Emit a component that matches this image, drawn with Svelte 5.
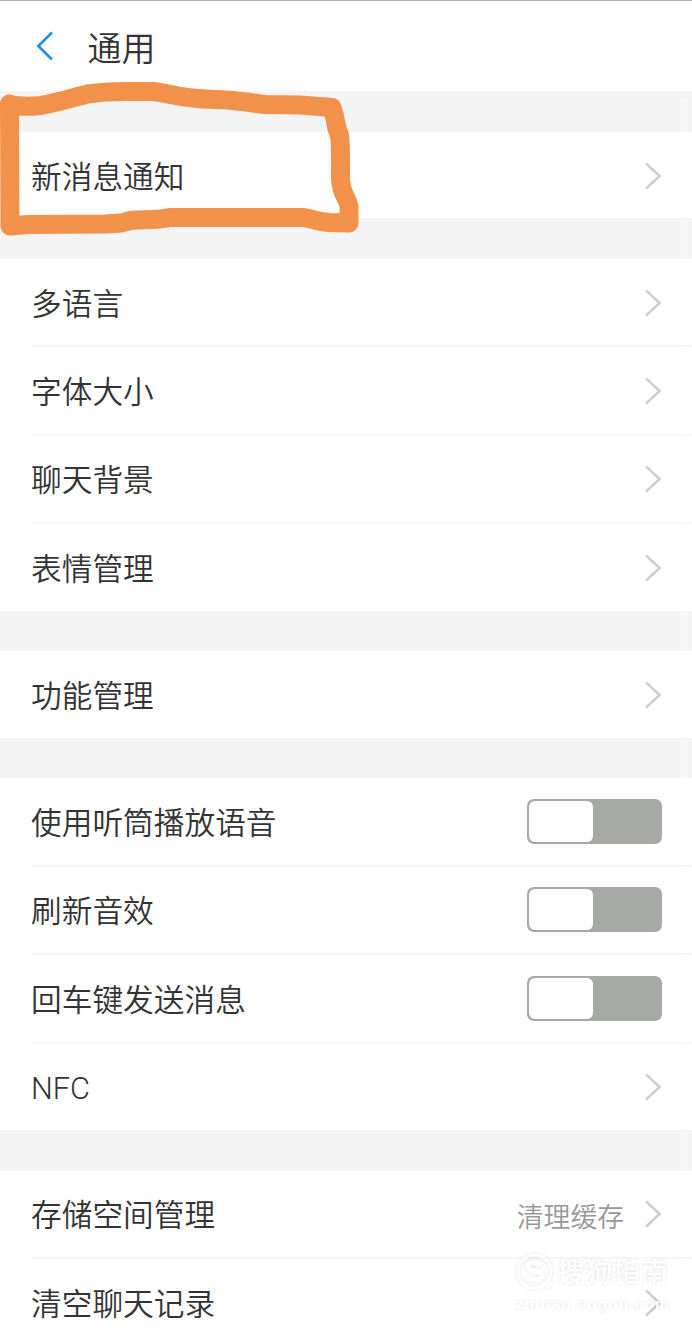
<script lang="ts">
  interface Item {
    label: string;
    value?: string;
    on?: boolean;
  }

  let groups: Item[][] = $state([
    [{ label: '新消息通知' }],
    [{ label: '多语言' }, { label: '字体大小' }, { label: '聊天背景' }, { label: '表情管理' }],
    [{ label: '功能管理' }],
    [
      { label: '使用听筒播放语音', on: false },
      { label: '刷新音效', on: false },
      { label: '回车键发送消息', on: false },
      { label: 'NFC' },
    ],
    [{ label: '存储空间管理', value: '清理缓存' }, { label: '清空聊天记录' }],
  ]);
</script>

<div class="screen">
  <header>
    <svg class="back" width="20" height="30" viewBox="0 0 20 30">
      <path d="M17 1.500 3.300 15 17 28.500" />
    </svg>
    <h1>通用</h1>
  </header>

  {#each groups as group}
    <section>
      {#each group as item (item.label)}
        <div class="row">
          <span class="label">{item.label}</span>
          {#if item.value}<span class="value">{item.value}</span>{/if}
          {#if item.on != null}
            <button
              class="toggle"
              class:on={item.on}
              aria-label={item.label}
              onclick={() => (item.on = !item.on)}
            >
              <span class="knob"></span>
            </button>
          {:else}
            <svg class="arrow" width="18" height="30" viewBox="0 0 18 30">
              <path d="M2 2.300 15.600 15 2 27.700" />
            </svg>
          {/if}
        </div>
      {/each}
    </section>
  {/each}

  <div class="edge"></div>

  <svg class="marker" width="380" height="250" viewBox="0 0 380 250">
    <path
      d="M9.500 104 C15 106.500 30 106.500 40 105.500 C56 103 75 97 88 94 C105 91.500 112 91.500 125 91.500 L153 91.500 C168 93 178 97 193 98 C210 100 220 99 237 101 C248 102 258 104 265 104.500 L300 105 L332 107.500 C337 121 335 127 339.500 135 C341 146 340.500 170 340.500 180 C342 197 348 197 349 207 L349 223 L329 222.500 C314 221 313 219 304 217.500 L170 217.500 C155 221 142 219 130 220.500 C120 224.500 116 223 105 224 L28 224.500 L10 226 L9.500 104"
    />
  </svg>

  <div class="watermark">
    <svg width="38" height="38" viewBox="0 0 38 38">
      <circle cx="18.500" cy="18.500" r="16.500" />
      <path class="letter" d="M26.500 11.500 C20 9 11 9 11.500 14 C12 19.500 26 16.500 26 22.500 C26 28 16 27.500 10.500 25" />
      <path d="M30 34.500 35.500 29.500" />
    </svg>
    <span class="brand">搜狗指南</span>
    <span class="site">zhinan.sogou.com</span>
  </div>
</div>

<style>
  :global(body) {
    background: #f3f3f3;
  }

  .screen {
    position: relative;
    height: 1339px;
    overflow: hidden;
    background: #f4f4f4;
    color: #333;
    font-family: Roboto, 'Noto Sans CJK SC', sans-serif;
    font-weight: 350;
  }

  header {
    display: flex;
    align-items: center;
    box-sizing: border-box;
    height: 91.3px;
    padding: 0 0 1px 35px;
    border-top: 1px solid #b4b4b4;
    background: #fff;
  }

  h1 {
    margin: 6px 0 0 32.5px;
    font-size: 34px;
    font-weight: 350;
    line-height: 48px;
  }

  svg {
    flex: none;
    fill: none;
  }

  .back {
    stroke: #188eee;
    stroke-width: 2.5;
  }

  section {
    margin-top: 40.6px;
    padding-left: 31px;
    background: #fff;
  }

  .row {
    display: flex;
    align-items: center;
    box-sizing: border-box;
    height: 88.4px;
    padding-right: 30px;
    border-bottom: 2px solid #f6f6f6;
  }

  .row:last-child {
    height: 86.5px;
    border-bottom: 0;
  }

  .label {
    flex: 1;
    padding-top: 5px;
    font-size: 30.7px;
    line-height: 44px;
  }

  .value {
    margin-right: 20px;
    padding-top: 3px;
    color: #999;
    font-size: 26.8px;
  }

  .arrow {
    margin-top: 1px;
    stroke: #ccc;
    stroke-width: 2.5;
  }

  .toggle {
    display: flex;
    box-sizing: border-box;
    width: 135px;
    height: 45px;
    padding: 2px;
    border: 0;
    border-radius: 7px;
    background: #a7a9a6;
  }

  .toggle.on {
    justify-content: flex-end;
    background: #188eee;
  }

  .knob {
    width: 64px;
    height: 41px;
    border-radius: 6px;
    background: #fff;
  }

  .edge {
    position: absolute;
    top: 98px;
    right: 4px;
    width: 8px;
    height: 1192px;
    background: rgba(250, 250, 250, 0.45);
  }

  .marker {
    position: absolute;
    top: 0;
    left: 0;
    stroke: #f2924a;
    stroke-width: 19;
    stroke-linecap: round;
    stroke-linejoin: round;
  }

  .watermark {
    position: absolute;
    top: 1252px;
    left: 516px;
    display: grid;
    grid-template-columns: 38px auto;
    column-gap: 3px;
    align-items: center;
    color: #fff;
    filter: drop-shadow(0 0 1.5px rgba(0, 0, 0, 0.12));
  }

  .watermark svg {
    stroke: #fff;
    stroke-width: 3;
  }

  .watermark .letter {
    stroke-width: 5;
  }

  .brand {
    padding-top: 2px;
    font-size: 27.8px;
    font-weight: 500;
    line-height: 38px;
  }

  .site {
    grid-column: 1 / -1;
    font: 700 15px/24px 'Liberation Sans', sans-serif;
    letter-spacing: 1.4px;
  }
</style>
